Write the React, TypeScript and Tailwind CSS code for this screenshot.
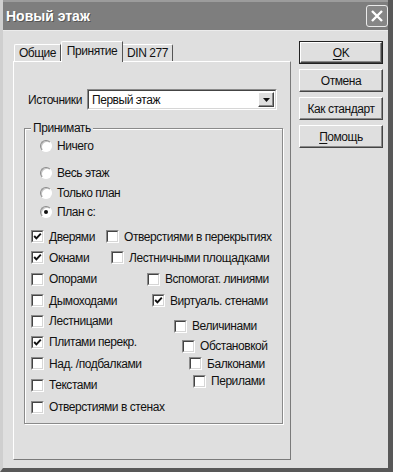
import type { ReactNode } from "react";

const font = "font-['Liberation_Sans',Arial,sans-serif]";

function CheckBox({ checked, label }: { checked?: boolean; label: string }) {
  return (
    <span className="flex items-center">
      <span className="block w-[13px] h-[13px] border border-t-[#8a8a8a] border-l-[#8a8a8a] border-b-white border-r-white">
        <span className="flex items-center justify-center w-full h-full bg-white border border-t-[#444] border-l-[#444] border-b-[#d6d6d6] border-r-[#d6d6d6]">
          {checked && (
            <svg width="9" height="9" viewBox="0 0 9 9">
              <polyline points="1.2,4 3.4,6.4 7.8,1.6" fill="none" stroke="#111" strokeWidth="1.9" />
            </svg>
          )}
        </span>
      </span>
      <span className="ml-[5px] whitespace-nowrap">{label}</span>
    </span>
  );
}

function Radio({ checked, label }: { checked?: boolean; label: string }) {
  return (
    <span className="flex items-center">
      <span className="flex items-center justify-center w-[12px] h-[12px] rounded-full bg-white border border-t-[#8a8a8a] border-l-[#8a8a8a] border-b-white border-r-white shadow-[inset_1px_1px_0_#c4c4c4]">
        {checked && <span className="block w-[4px] h-[4px] rounded-full bg-[#111]" />}
      </span>
      <span className="ml-[5px] whitespace-nowrap">{label}</span>
    </span>
  );
}

function Button({ children, isDefault }: { children: ReactNode; isDefault?: boolean }) {
  const inner = (
    <button className="flex items-center justify-center w-full h-full bg-[#dfdfdf] border border-t-white border-l-white border-b-[#444] border-r-[#444] shadow-[inset_-1px_-1px_0_#8a8a8a] text-[12px] text-[#111] tracking-[-0.45px]">
      {children}
    </button>
  );
  return isDefault ? (
    <div className="w-[84px] h-[23px] border border-[#222]">{inner}</div>
  ) : (
    <div className="w-[84px] h-[23px]">{inner}</div>
  );
}

type Row = {
  h: string;
  left: string;
  leftChecked?: boolean;
  cell: string;
  right: string;
  rightChecked?: boolean;
  shift?: string;
};

const rows: Row[] = [
  { h: "h-[21px]", left: "Дверями", leftChecked: true, cell: "w-[75px]", right: "Отверстиями в перекрытиях" },
  { h: "h-[21px]", left: "Окнами", leftChecked: true, cell: "w-[80px]", right: "Лестничными площадками" },
  { h: "h-[22px]", left: "Опорами", cell: "w-[116px]", right: "Вспомогат. линиями" },
  { h: "h-[21px]", left: "Дымоходами", cell: "w-[121px]", right: "Виртуаль. стенами", rightChecked: true },
  { h: "h-[20px]", left: "Лестницами", cell: "w-[143px]", right: "Величинами", shift: "mt-[10px]" },
  { h: "h-[22px]", left: "Плитами перекр.", leftChecked: true, cell: "w-[151px]", right: "Обстановкой", shift: "mt-[8px]" },
  { h: "h-[21px]", left: "Над. /подбалками", cell: "w-[158px]", right: "Балконами" },
  { h: "h-[22px]", left: "Текстами", cell: "w-[162px]", right: "Перилами", shift: "mb-[8px]" },
];

export default function App() {
  return (
    <div
      className={`${font} w-[393px] h-[472px] flex flex-col bg-[#dfdfdf] text-[12px] text-[#111] tracking-[-0.45px] border-l-[3px] border-l-[#cfcfcf] border-r-[5px] border-r-[#585858] border-b-[4px] border-b-[#585858]`}
    >
      {/* title bar */}
      <div className="flex items-center justify-between h-[30px] shrink-0 bg-[#7e7e7e] border-t-2 border-t-[#9c9c9c]">
        <span className="pl-[3px] text-[14px] font-bold tracking-normal text-white [text-shadow:1px_1px_0_#555]">Новый этаж</span>
        <span className="flex items-center justify-center w-[22px] h-[22px] rounded-[3px] border border-[#eaeaea] bg-[#868686]">
          <svg width="14" height="14" viewBox="0 0 14 14">
            <path d="M2 2 L12 12 M12 2 L2 12" stroke="#fff" strokeWidth="2.4" />
          </svg>
        </span>
      </div>

      <div className="flex pl-[10px] pt-[10px] border-t border-t-[#ececec]">
        {/* tab control */}
        <div className="w-[278px]">
          <div className="flex items-end h-[20px] pl-[1px]">
            <div className="flex items-center justify-center w-[47px] h-[17px] border-t border-l border-t-white border-l-white border-r border-r-[#555] rounded-tl-[2px]">
              Общие
            </div>
            <div className="relative z-10 flex items-center justify-center w-[62px] h-[21px] -mb-px bg-[#dfdfdf] border-t border-l border-t-white border-l-white border-r border-r-[#555] rounded-tl-[2px] pb-[2px]">
              Принятие
            </div>
            <div className="flex items-center justify-center w-[50px] h-[17px] border-t border-t-white border-r border-r-[#555] rounded-tr-[2px]">
              DIN 277
            </div>
          </div>

          <div className="h-[399px] border-t border-l border-t-white border-l-white border-r border-b border-r-[#7a7a7a] border-b-[#7a7a7a]">
            <div className="flex items-center mt-[27px] ml-[14px]">
              <span className="w-[59px]">Источники</span>
              <div className="flex items-center w-[190px] h-[21px] border border-t-[#8a8a8a] border-l-[#8a8a8a] border-b-white border-r-white">
                <div className="flex items-center flex-1 h-full bg-white border border-t-[#444] border-l-[#444] border-b-[#d6d6d6] border-r-[#d6d6d6] pl-[3px] pr-[1px]">
                  <span className="flex-1">Первый этаж</span>
                  <span className="flex items-center justify-center w-[16px] h-[15px] bg-[#dfdfdf] border border-t-white border-l-white border-b-[#444] border-r-[#444] shadow-[inset_-1px_-1px_0_#8a8a8a]">
                    <svg width="7" height="4" viewBox="0 0 7 4">
                      <path d="M0 0 H7 L3.5 4 Z" fill="#111" />
                    </svg>
                  </span>
                </div>
              </div>
            </div>

            <fieldset className="mt-[11px] ml-[10px] w-[259px] h-[303px] border border-[#8a8a8a] shadow-[1px_1px_0_#fff,inset_1px_1px_0_#fff]">
              <legend className="ml-[6px] px-[2px] bg-[#dfdfdf] leading-[14px]">Принимать</legend>

              <div className="pl-[15px]">
                <div className="flex items-center h-[20px] mt-[1px]">
                  <Radio label="Ничего" />
                </div>
                <div className="flex items-center h-[20px] mt-[7px]">
                  <Radio label="Весь этаж" />
                </div>
                <div className="flex items-center h-[19px]">
                  <Radio label="Только план" />
                </div>
                <div className="flex items-center h-[20px]">
                  <Radio label="План с:" checked />
                </div>
              </div>

              <div className="pl-[6px] mt-[4px]">
                {rows.map((r) => (
                  <div key={r.left} className={`flex items-center ${r.h}`}>
                    <div className={`${r.cell} shrink-0`}>
                      <CheckBox label={r.left} checked={r.leftChecked} />
                    </div>
                    <div className={r.shift}>
                      <CheckBox label={r.right} checked={r.rightChecked} />
                    </div>
                  </div>
                ))}
                <div className="flex items-center h-[22px]">
                  <CheckBox label="Отверстиями в стенах" />
                </div>
              </div>
            </fieldset>
          </div>
        </div>

        {/* buttons */}
        <div className="flex flex-col gap-[5px] ml-[8px]">
          <Button isDefault>
            <span className="underline underline-offset-2">O</span>K
          </Button>
          <Button>Отмена</Button>
          <Button>Как стандарт</Button>
          <Button>
            <span className="underline underline-offset-2">П</span>омощь
          </Button>
        </div>
      </div>
    </div>
  );
}
